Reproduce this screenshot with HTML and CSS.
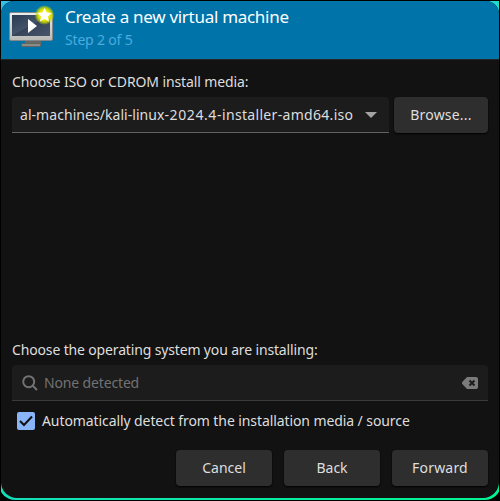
FILE: index.html
```html
<!DOCTYPE html>
<html lang="en">
<head>
<meta charset="utf-8">
<title>Create a new virtual machine</title>
<link rel="stylesheet" href="styles.css">
</head>
<body>
<div class="screen">
<div class="frame">
<main class="window">
  <header class="header">
    <svg class="logo" width="48" height="48" viewBox="0 0 48 48">
      <defs>
        <linearGradient id="bezel" x1="0" y1="0" x2="0" y2="1"><stop offset="0" stop-color="#eeeeec"/><stop offset="1" stop-color="#b9bab6"/></linearGradient>
        <linearGradient id="display" x1="0" y1="0" x2="1" y2="1"><stop offset="0" stop-color="#293a51"/><stop offset=".48" stop-color="#43536a"/><stop offset=".5" stop-color="#35445b"/><stop offset="1" stop-color="#48566a"/></linearGradient>
        <radialGradient id="glow"><stop offset="0" stop-color="#fffb80"/><stop offset=".55" stop-color="#e5e600"/><stop offset=".75" stop-color="#c8d600" stop-opacity=".8"/><stop offset="1" stop-color="#b5d300" stop-opacity="0"/></radialGradient>
      </defs>
      <path d="M17 37h16v4H17z" fill="#686a68"/>
      <rect x="13.500" y="39.500" width="19" height="3" rx="1" fill="#8b8c88" stroke="#62645f"/>
      <rect x="1.500" y="8.500" width="43" height="28" rx="1.500" fill="url(#bezel)" stroke="#85888a"/>
      <rect x="4" y="11" width="38" height="21" fill="url(#display)"/>
      <path d="M20 15v14l9-7z" fill="#fff"/>
      <circle cx="36.500" cy="11" r="10" fill="url(#glow)"/>
      <path d="M36.500 4l2.200 4.600 5 .5-3.800 3.500 1.100 5-4.500-2.600-4.500 2.600 1.100-5-3.800-3.500 5-.5z" fill="#fff"/>
    </svg>
    <div class="headings">
      <h1 class="title">Create a new virtual machine</h1>
      <div class="step">Step 2 of 5</div>
    </div>
  </header>
  <section class="content">
    <label class="label">Choose ISO or CDROM install media:</label>
    <div class="media-row">
      <div class="combo">
        <div class="path"><span class="folder">al-machines/kali-linux</span><span class="version">-2024.4-</span><span class="suffix">installer-amd64.iso</span></div>
        <svg class="arrow" width="12" height="6" viewBox="0 0 12 6"><path d="M0 0h12L6 6z" fill="#a3a3a3"/></svg>
      </div>
      <button class="button browse">Browse...</button>
    </div>
    <label class="label os-label">Choose the operating system you are installing:</label>
    <div class="search">
      <svg width="16" height="16" viewBox="0 0 16 16" fill="none" stroke="#727272" stroke-width="2"><circle cx="6.700" cy="6.700" r="5.500"/><path d="M10.500 10.500l4.500 4.500"/></svg>
      <span class="placeholder">None detected</span>
      <svg class="clear" width="16" height="12" viewBox="0 0 16 12"><path d="M5 0h9q2 0 2 2v8q0 2-2 2H5L0 6.700V5.300z" fill="#7b7b7b"/><path d="M7.500 3.500l5 5m0-5l-5 5" stroke="#1c1c1c" stroke-width="2"/></svg>
    </div>
    <div class="check-row">
      <span class="checkbox"><svg width="18" height="18" viewBox="0 0 18 18"><path d="M3 9l4 4 8-8.500" fill="none" stroke="#111" stroke-width="2"/></svg></span>
      <span>Automatically detect from the installation media / source</span>
    </div>
    <footer class="actions">
      <button class="button">Cancel</button>
      <button class="button">Back</button>
      <button class="button forward">Forward</button>
    </footer>
  </section>
</main>
</div>
</div>
</body>
</html>
```

FILE: styles.css
```css
* { box-sizing: border-box; }
body { margin: 0; background: #000; color: #dedede; font: 14px/20px "Noto Sans", sans-serif; }
.screen { height: 501px; padding: 1px; overflow: hidden; clip-path: inset(0 1px); }
.frame { margin: 0 -2px; padding: 0 2px 2px; height: 499px; border-radius: 0 0 16px 16px; background: linear-gradient(100deg, #35c0e8, #20dccb) top / 100% 30px no-repeat, linear-gradient(90deg, #13dfb8, #00f590); }
.window { height: 497px; background: #121212; border-radius: 13px 13px 16px 16px; overflow: hidden; display: flex; flex-direction: column; }
.header { flex: none; height: 59px; padding: 3px 7px; display: flex; background: #0073a9; border-bottom: 1px solid #272727; }
.logo { flex: none; }
.headings { margin-left: 9px; padding-top: 1px; }
.title { margin: 0; font-size: 17px; line-height: 24px; font-weight: 400; letter-spacing: -.29px; color: #fff; }
.step { line-height: 21px; letter-spacing: -.18px; color: #4cabdf; }
.content { flex: 1; padding: 12px 11px; display: flex; flex-direction: column; }
.label { height: 20px; letter-spacing: -.11px; }
.media-row { display: flex; gap: 5px; margin-top: 5px; }
.combo { width: 377px; height: 36px; padding: 0 12px 0 8px; display: flex; align-items: center; justify-content: space-between; background: #1c1c1c; border-bottom: 1px solid #626262; border-radius: 4px 4px 0 0; }
.path { overflow: hidden; white-space: nowrap; }
.folder { letter-spacing: .05px; }
.version { letter-spacing: .6px; }
.suffix { letter-spacing: .31px; }
.button { width: 96px; height: 36px; padding: 0; border: 0; border-radius: 4px; background: #2e2e2e; color: #dedede; font: inherit; box-shadow: 0 1px 2px #000; }
.browse { width: 94px; letter-spacing: .2px; }
.forward { letter-spacing: .2px; }
.os-label { margin-top: 207px; letter-spacing: -.15px; }
.search { height: 36px; margin-top: 5px; padding: 0 10px; display: flex; align-items: center; background: #1c1c1c; border-bottom: 1px solid #3b3b3b; border-radius: 4px 4px 0 0; color: #727272; }
.placeholder { margin-left: 6px; letter-spacing: -.15px; }
.clear { margin-left: auto; }
.check-row { height: 20px; margin-top: 10px; padding-left: 5px; display: flex; align-items: center; gap: 7px; white-space: nowrap; letter-spacing: -.09px; }
.checkbox { width: 18px; height: 18px; background: #8ab4f8; border-radius: 2px; }
.checkbox svg { display: block; }
.actions { margin-top: 19px; display: flex; justify-content: flex-end; gap: 12px; }
```
